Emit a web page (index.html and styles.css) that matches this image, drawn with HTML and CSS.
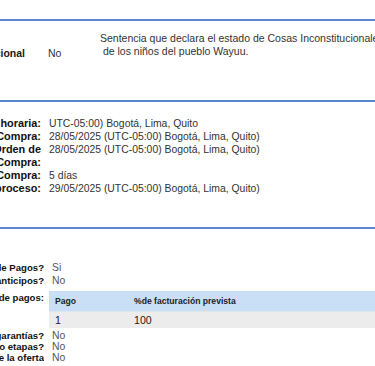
FILE: index.html
```html
<!DOCTYPE html>
<html lang="es">
<head>
<meta charset="utf-8">
<link rel="stylesheet" href="styles.css">
</head>
<body>
<div class="page">
  <div class="top"></div>
  <section class="band band-first">
    <div class="row-main">
      <div class="lbl-cell"><span class="lbl-bold">Situación Excepcional</span></div>
      <div class="mid">No</div>
      <div class="desc">Sentencia que declara el estado de Cosas Inconstitucionales<br>&nbsp;de los niños del pueblo Wayuu.</div>
    </div>
  </section>
  <section class="band band-dates">
    <div class="kv"><div class="k"><span>Zona horaria:</span></div><div class="v">UTC-05:00) Bogotá, Lima, Quito</div></div>
    <div class="kv"><div class="k"><span>Fecha de inicio de Compra:</span></div><div class="v">28/05/2025 (UTC-05:00) Bogotá, Lima, Quito)</div></div>
    <div class="kv"><div class="k"><span>Fecha estimada de la Orden de<br>Compra:</span></div><div class="v">28/05/2025 (UTC-05:00) Bogotá, Lima, Quito)</div></div>
    <div class="kv"><div class="k"><span>Duración de la Compra:</span></div><div class="v">5 días</div></div>
    <div class="kv"><div class="k"><span>Fecha de terminación del proceso:</span></div><div class="v">29/05/2025 (UTC-05:00) Bogotá, Lima, Quito)</div></div>
  </section>
  <section class="band band-pay">
    <div class="kv2"><div class="k2"><span>¿Definir Plan de Pagos?</span></div><div class="v2">Si</div></div>
    <div class="kv2"><div class="k2"><span>¿Pagos por anticipos?</span></div><div class="v2">No</div></div>
    <div class="kv2 plan"><div class="k2"><span>Plan de pagos:</span></div>
      <div class="tbl">
        <div class="th">
          <span class="c1">Pago</span><span class="c2">%de facturación prevista</span>
        </div>
        <div class="tr">
          <span class="c1">1</span><span class="c2">100</span>
        </div>
      </div>
    </div>
    <div class="kv3"><div class="k2"><span>¿Solicitud de garantías?</span></div><div class="v2">No</div></div>
    <div class="kv3"><div class="k2"><span>¿Definir lotes o etapas?</span></div><div class="v2">No</div></div>
    <div class="kv3"><div class="k2"><span>¿Ajustes de la oferta</span></div><div class="v2">No</div></div>
  </section>
</div>
</body>
</html>
```
FILE: styles.css
```css
html, body {
  margin: 0;
  padding: 0;
  background: #ffffff;
}
body {
  font-family: "Liberation Sans", Arial, sans-serif;
  color: #1a1a1a;
  width: 375px;
  height: 366px;
  overflow: hidden;
}
.page {
  display: flex;
  flex-direction: column;
}
.top {
  height: 19px;
}
.band-first {
  border-top: 2px solid #5b86cf;
  border-bottom: 2px solid #5b86cf;
  height: 83px;
  box-sizing: border-box;
}
.row-main {
  display: grid;
  grid-template-columns: 48px 52px 1fr;
  padding-top: 11px;
  font-size: 10.5px;
  line-height: 13px;
}
.lbl-cell {
  display: flex;
  justify-content: flex-end;
  overflow: hidden;
  padding-top: 15px;
  padding-right: 23px;
}
.lbl-cell span {
  white-space: nowrap;
  font-weight: bold;
  flex-shrink: 0;
}
.mid {
  padding-top: 15px;
  color: #333;
}
.desc {
  white-space: nowrap;
  overflow: hidden;
  color: #333;
}
.band-dates {
  padding-top: 15px;
  height: 127px;
  box-sizing: border-box;
  border-bottom: 2px solid #5b86cf;
  font-size: 10.4px;
  line-height: 13px;
}
.kv {
  display: grid;
  grid-template-columns: 41px 1fr;
  column-gap: 8px;
}
.k {
  display: flex;
  justify-content: flex-end;
  overflow: hidden;
}
.k span {
  white-space: nowrap;
  flex-shrink: 0;
  font-weight: bold;
  font-size: 10.9px;
  text-align: right;
  color: #111;
}
.v {
  white-space: nowrap;
  color: #333;
}
.band-pay {
  padding-top: 32px;
  font-size: 10.4px;
  line-height: 13px;
}
.kv2, .kv3 {
  display: grid;
  grid-template-columns: 44px 1fr;
  column-gap: 8px;
}
.kv3 {
  line-height: 11px;
}
.k2 {
  display: flex;
  justify-content: flex-end;
  overflow: hidden;
}
.k2 span {
  white-space: nowrap;
  flex-shrink: 0;
  font-weight: bold;
  font-size: 9.6px;
  color: #111;
}
.v2 {
  color: #555;
}
.plan {
  column-gap: 5px;
  margin-top: 4px;
  margin-bottom: 2px;
}
.tbl {
  display: flex;
  flex-direction: column;
}
.th, .tr {
  display: grid;
  grid-template-columns: 79px 1fr;
  padding-left: 6px;
}
.th {
  background: #c9dff5;
  height: 20px;
  align-items: center;
  font-size: 8.6px;
  font-weight: bold;
  color: #222;
  border-bottom: 1px solid #dde7f0;
}
.tr {
  background: #ececec;
  height: 16px;
  align-items: center;
  font-size: 10.6px;
  color: #222;
}
```
